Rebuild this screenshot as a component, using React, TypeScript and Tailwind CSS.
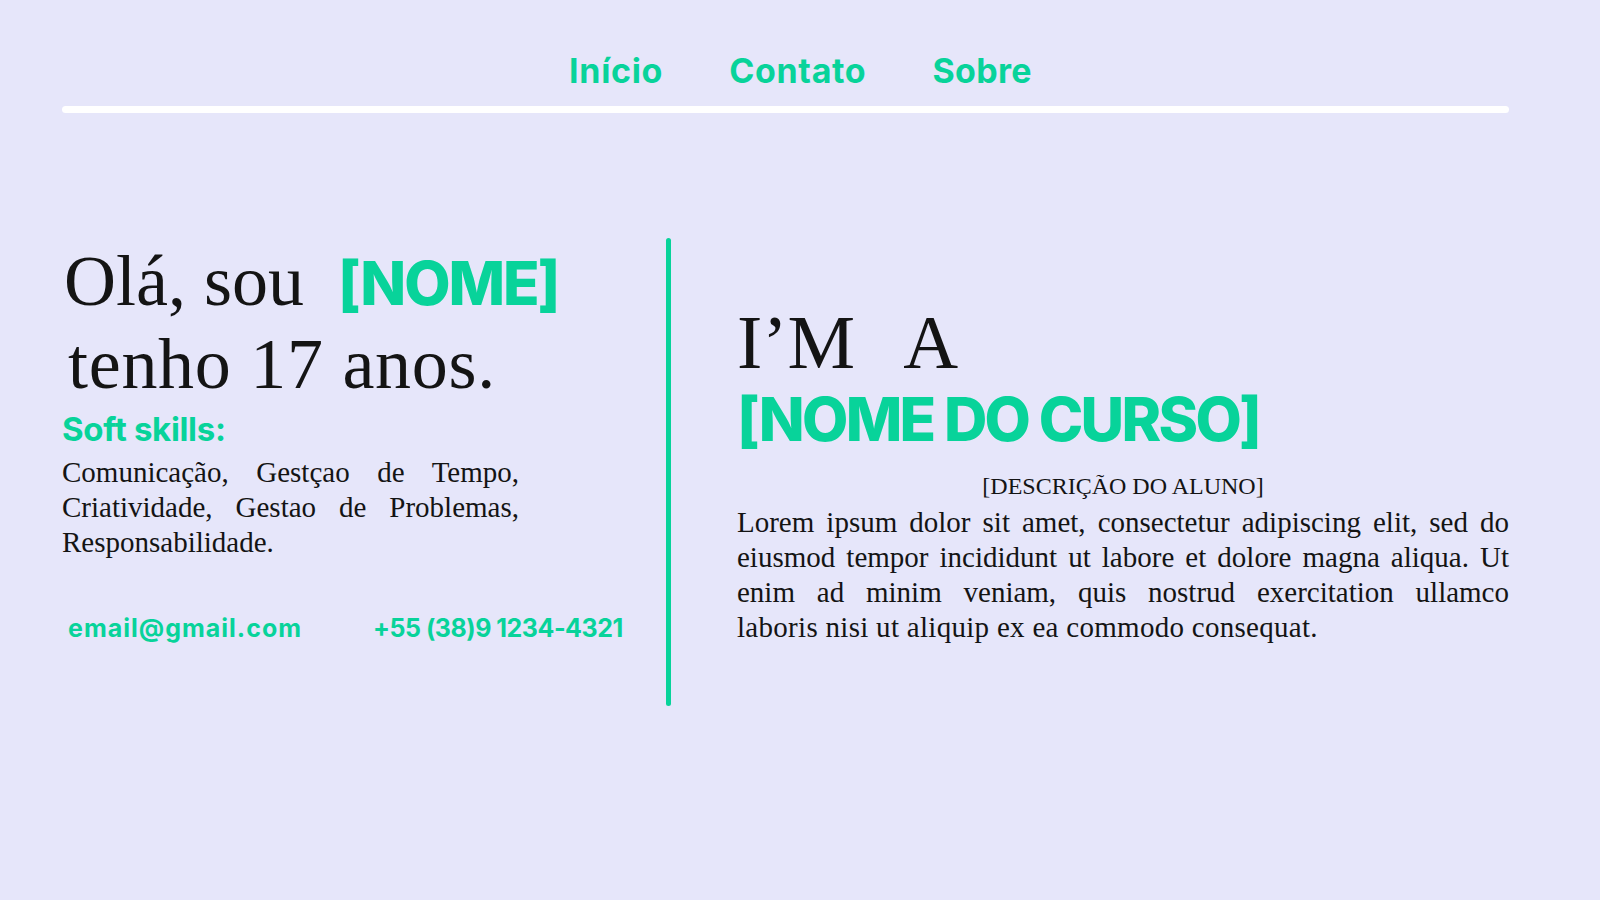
import React from 'react';

const serif = "font-['Liberation_Serif',serif]";
const sans = "font-['Inter',sans-serif]";

const skills = [
  'Comunicação, Gestçao de Tempo,',
  'Criatividade, Gestao de Problemas,',
];

const lorem = [
  'Lorem ipsum dolor sit amet, consectetur adipiscing elit, sed do',
  'eiusmod tempor incididunt ut labore et dolore magna aliqua. Ut',
  'enim ad minim veniam, quis nostrud exercitation ullamco',
];

const App = () => {
  return (
    <div className="min-h-screen w-full bg-[#e6e6fa] text-[#141414]">
      {/* Navbar */}
      <nav className="pt-[54px]">
        <div className={`flex justify-center gap-[66px] pl-[1px] text-[34px] leading-none font-bold text-[#08d39a] ${sans}`}>
          <a href="#" className="tracking-[0.02em]">Início</a>
          <a href="#" className="tracking-[0.02em]">Contato</a>
          <a href="#" className="tracking-[0.01em]">Sobre</a>
        </div>
        <div className="ml-[62px] mt-[18px] h-[7px] w-[1447px] rounded-full bg-white" />
      </nav>

      {/* Main */}
      <main className="ml-[62px] mt-[125px] flex">
        {/* Left column */}
        <div className="w-[604px] pt-[2px]">
          <h1 className={`pl-[2px] text-[72px] leading-[83px] font-normal ${serif}`}>
            Olá, sou{' '}
            <span className={`ml-[16px] text-[60px] leading-none font-extrabold tracking-[-0.035em] text-[#08d39a] ${sans}`}>
              [NOME]
            </span>
            <br />
            <span className="pl-[4px] tracking-[0.01em]">tenho 17 anos.</span>
          </h1>
          <h2 className={`mt-[3px] text-[33px] leading-[40px] font-bold tracking-[-0.01em] text-[#08d39a] ${sans}`}>
            Soft skills:
          </h2>
          <div className={`mt-[6px] w-[457px] text-[29px] leading-[35px] ${serif}`}>
            {skills.map((line) => (
              <div key={line} className="text-justify [text-align-last:justify]">
                {line}
              </div>
            ))}
            <div>Responsabilidade.</div>
          </div>
          <div className={`mt-[52px] flex text-[25px] leading-[32px] font-bold text-[#08d39a] ${sans}`}>
            <span className="ml-[6px] tracking-[0.04em]">email@gmail.com</span>
            <span className="ml-[71px] tracking-[-0.02em]">+55 (38)9 1234-4321</span>
          </div>
        </div>

        {/* Divider */}
        <div className="h-[468px] w-[5px] rounded-full bg-[#08d39a]" />

        {/* Right column */}
        <div className="ml-[66px] w-[772px] pt-[66px]">
          <h2 className={`flex text-[76px] leading-none font-normal ${serif}`}>
            <span>I’M</span>
            <span className="ml-[48px]">A</span>
          </h2>
          <h3 className={`mt-[9px] text-[60px] leading-none font-extrabold tracking-[-0.045em] text-[#08d39a] ${sans}`}>
            [NOME DO CURSO]
          </h3>
          <div className={`mt-[24px] ${serif}`}>
            <p className="text-center text-[24px] leading-[26px]">[DESCRIÇÃO DO ALUNO]</p>
            <div className="mt-[6px] text-[29px] leading-[35px]">
              {lorem.map((line) => (
                <div key={line} className="text-justify [text-align-last:justify]">
                  {line}
                </div>
              ))}
              <div className="tracking-[0.01em]">laboris nisi ut aliquip ex ea commodo consequat.</div>
            </div>
          </div>
        </div>
      </main>
    </div>
  );
};

export default App;
